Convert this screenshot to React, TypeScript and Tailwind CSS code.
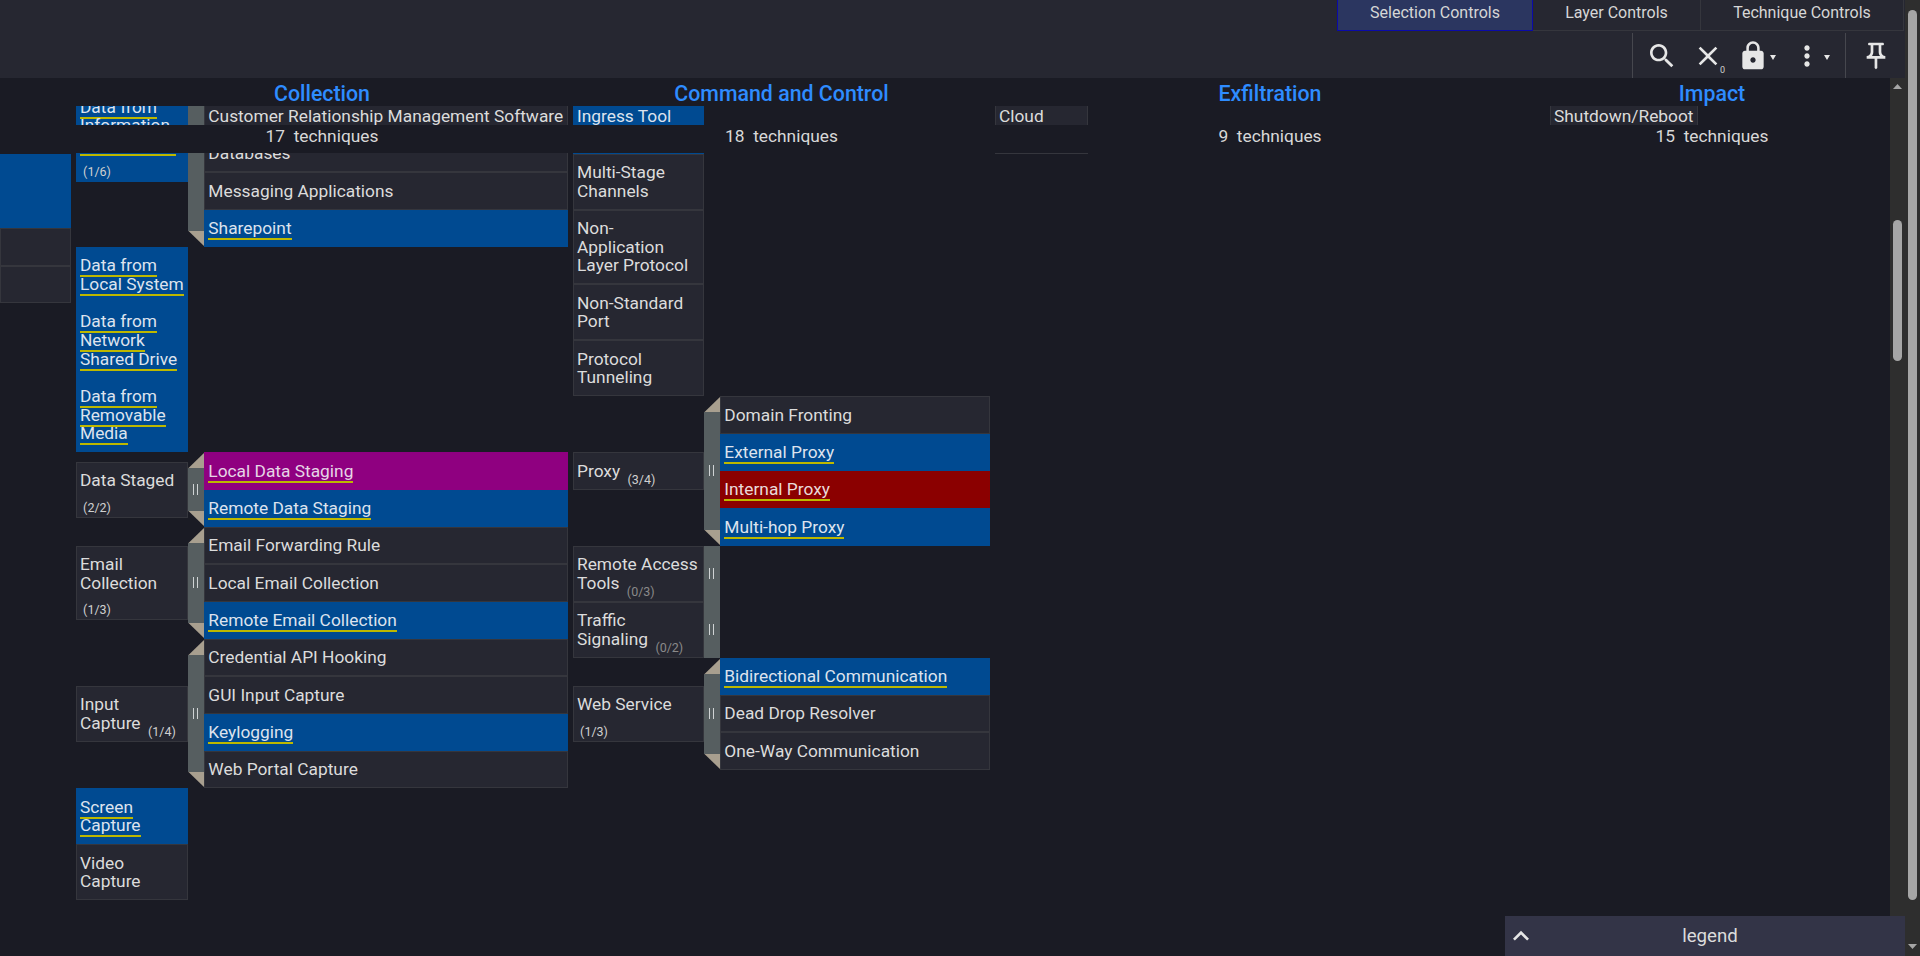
import React from "react";

type Sub = { t: string; c?: "blue" | "magenta" | "red" };

const bgOf = (c?: string) =>
  c === "blue"
    ? "bg-[#004a91] border-[#004a91] text-[#dde3ee]"
    : c === "magenta"
    ? "bg-[#8f0080] border-[#8f0080] text-[#e6d5e6]"
    : c === "red"
    ? "bg-[#8b0000] border-[#8b0000] text-[#eadada]"
    : "bg-[#262731] border-[#35363d] text-[#dcdcdc]";

function Cell({ t, c, count, dim, tight, className = "" }: { t?: string; c?: string; count?: string; dim?: boolean; tight?: boolean; className?: string }) {
  return (
    <div className={`box-border border pl-[3px] ${tight ? "pr-[1.33px]" : "pr-[3.66px]"} py-[8.33px] leading-[18.67px] ${bgOf(c)} ${className}`}>
      {t && (c ? <span className="border-b-2 border-[#bdb800]">{t}</span> : <span>{t}</span>)}
      {count && " "}
      {count && (
        <span className={`text-[12.5px] leading-[0] align-[-7px] ${dim ? "text-[#8a8a8a]" : "text-[#d0d0d0]"}`}>{"\u00a0" + count}</span>
      )}
    </div>
  );
}

function Bars() {
  return (
    <svg width="8" height="11" viewBox="0 0 8 11" className="block">
      <rect x="1" y="0" width="1" height="11" fill="#cfd3d4" />
      <rect x="5" y="0" width="1" height="11" fill="#cfd3d4" />
    </svg>
  );
}

function HandleBody() {
  return (
    <div className="flex-1 bg-[#565e60] flex items-center justify-center">
      <Bars />
    </div>
  );
}

function Handle() {
  return (
    <div className="w-[16.33px] shrink-0 flex flex-col">
      <svg width="17" height="16" viewBox="0 0 17 16" className="block shrink-0">
        <polygon points="0.5,16 17,0 17,16" fill="#a89f8f" />
      </svg>
      <HandleBody />
      <svg width="17" height="16" viewBox="0 0 17 16" className="block shrink-0">
        <polygon points="0.5,0 17,0 17,16" fill="#a89f8f" />
      </svg>
    </div>
  );
}

function Group({ t, c, count, subs, w, sw }: { t: string; c?: string; count: string; subs: Sub[]; w: string; sw: string }) {
  return (
    <div className="flex">
      <div className={`flex items-center shrink-0 ${w}`}>
        <Cell t={t} c={c} count={count} className="w-full" />
      </div>
      <Handle />
      <div className={`flex flex-col shrink-0 ${sw}`}>
        {subs.map((s) => (
          <Cell key={s.t} t={s.t} c={s.c} tight />
        ))}
      </div>
    </div>
  );
}

function Icon({ d, className = "" }: { d: string; className?: string }) {
  return (
    <svg width="32" height="32" viewBox="0 0 24 24" fill="#e6e6e6" className={`block shrink-0 ${className}`}>
      <path d={d} />
    </svg>
  );
}

function Caret({ className = "" }: { className?: string }) {
  return (
    <svg width="6" height="5" viewBox="0 0 6 5" className={`block shrink-0 mt-[4px] ${className}`}>
      <polygon points="0,0 6,0 3,5" fill="#e6e6e6" />
    </svg>
  );
}

function Arrow({ up, className = "" }: { up?: boolean; className?: string }) {
  return (
    <svg width="9" height="5" viewBox="0 0 9 5" className={`block shrink-0 ${className}`}>
      <polygon points={up ? "0,5 9,5 4.5,0" : "0,0 9,0 4.5,5"} fill="#a6a6a6" />
    </svg>
  );
}

const cols = [
  { w: "w-[492px]", name: "Collection", n: 17 },
  { w: "w-[417px]", name: "Command and Control", n: 18 },
  { w: "w-[550px]", name: "Exfiltration", n: 9 },
  { w: "w-[324px]", name: "Impact", n: 15 },
];

export default function App() {
  const g = { w: "w-[112px]", sw: "w-[363.67px]" };
  const h = { w: "w-[131px]", sw: "w-[270px]" };
  return (
    <div className="flex w-[1920px] h-[956px] overflow-hidden bg-[#1a1b24] font-[Roboto,sans-serif] text-[17.33px] text-[#dcdcdc] relative">
      <div className="w-[1905px] shrink-0 flex flex-col">
        {/* top bar */}
        <div className="h-[78px] bg-[#262731] shrink-0 flex flex-col items-end">
          <div className="h-[31px] flex text-[16px] text-[#d6d6d6] pr-[1px]">
            <div className="w-[196px] bg-[#2b3660] border border-t-0 border-[#0a0aa8] flex items-center justify-center pb-[4px]">Selection Controls</div>
            <div className="w-[168px] border-b border-r border-[#35363d] flex items-center justify-center pb-[4px]">Layer Controls</div>
            <div className="w-[203px] border-b border-r border-[#35363d] flex items-center justify-center pb-[4px]">Technique Controls</div>
          </div>
          <div className="flex-1 flex pr-[1px] pt-[2px] w-[273px]">
            <div className="w-[213px] border-l border-[#46474e] flex items-center pl-[13px]">
              <Icon d="M15.5 14h-.79l-.28-.27C15.41 12.59 16 11.11 16 9.5 16 5.91 13.09 3 9.5 3S3 5.91 3 9.5 5.91 16 9.5 16c1.61 0 3.09-.59 4.23-1.57l.27.28v.79l5 4.99L20.49 19l-4.99-5zm-6 0C7.01 14 5 11.99 5 9.5S7.01 5 9.5 5 14 7.01 14 9.5 11.99 14 9.5 14z" />
              <div className="relative ml-[14px] shrink-0">
                <Icon d="M19 6.41L17.59 5 12 10.59 6.41 5 5 6.41 10.59 12 5 17.59 6.41 19 12 13.41 17.59 19 19 17.59 13.41 12z" />
                <span className="absolute left-[28px] top-[25px] text-[9px] leading-[10px] text-[#cfcfcf]">0</span>
              </div>
              <Icon className="ml-[13px]" d="M18 8h-1V6c0-2.76-2.24-5-5-5S7 3.24 7 6v2H6c-1.1 0-2 .9-2 2v10c0 1.1.9 2 2 2h12c1.1 0 2-.9 2-2V10c0-1.1-.9-2-2-2zm-6 9c-1.1 0-2-.9-2-2s.9-2 2-2 2 .9 2 2-.9 2-2 2zm3.1-9H8.9V6c0-1.71 1.39-3.1 3.1-3.1 1.71 0 3.1 1.39 3.1 3.1v2z" />
              <Caret className="ml-[1px]" />
              <Icon className="ml-[15px]" d="M12 8c1.1 0 2-.9 2-2s-.9-2-2-2-2 .9-2 2 .9 2 2 2zm0 2c-1.1 0-2 .9-2 2s.9 2 2 2 2-.9 2-2-.9-2-2-2zm0 6c-1.1 0-2 .9-2 2s.9 2 2 2 2-.9 2-2-.9-2-2-2z" />
              <Caret className="ml-[1px]" />
            </div>
            <div className="flex-1 border-l border-[#46474e] flex items-center pl-[14px]">
              <Icon d="M14 4v5c0 1.12.37 2.16 1 3H9c.65-.86 1-1.9 1-3V4h4m3-2H7c-.55 0-1 .45-1 1s.45 1 1 1h1v5c0 1.66-1.34 3-3 3v2h5.97v7l1 1 1-1v-7H19v-2c-1.66 0-3-1.34-3-3V4h1c.55 0 1-.45 1-1s-.45-1-1-1z" />
            </div>
          </div>
        </div>

        <div className="flex-1 flex min-h-0">
          <div className="w-[1890px] shrink-0 flex flex-col min-h-0">
            {/* tactic titles */}
            <div className="h-[28px] shrink-0 flex gap-[5px] pl-[76px]">
              {cols.map((c) => (
                <div key={c.name} className={`${c.w} shrink-0 text-center text-[21.33px] leading-[31px] font-medium text-[#2e8cff]`}>{c.name}</div>
              ))}
            </div>
            {/* scroller */}
            <div className="relative flex-1 min-h-0 overflow-hidden">
              <div className="flex gap-[5px] -mt-[83px]">
                <div className="w-[71px] shrink-0 flex flex-col pt-[130.67px]">
                  <div className="h-[74.67px] bg-[#004a91]" />
                  <Cell className="h-[37.33px]" />
                  <Cell className="h-[37.33px]" />
                </div>

                <div className="w-[492px] shrink-0 flex flex-col">
                  <Group {...g} t="Data from Information Repositories" c="blue" count="(1/6)" subs={[
                    { t: "Code Repositories" }, { t: "Confluence" }, { t: "Customer Relationship Management Software" },
                    { t: "Databases" }, { t: "Messaging Applications" }, { t: "Sharepoint", c: "blue" },
                  ]} />
                  <Cell t="Data from Local System" c="blue" tight className="w-[112px]" />
                  <Cell t="Data from Network Shared Drive" c="blue" className="w-[112px]" />
                  <Cell t="Data from Removable Media" c="blue" className="w-[112px]" />
                  <Group {...g} t="Data Staged" count="(2/2)" subs={[
                    { t: "Local Data Staging", c: "magenta" }, { t: "Remote Data Staging", c: "blue" },
                  ]} />
                  <Group {...g} t="Email Collection" count="(1/3)" subs={[
                    { t: "Email Forwarding Rule" }, { t: "Local Email Collection" }, { t: "Remote Email Collection", c: "blue" },
                  ]} />
                  <Group {...g} t="Input Capture" count="(1/4)" subs={[
                    { t: "Credential API Hooking" }, { t: "GUI Input Capture" }, { t: "Keylogging", c: "blue" }, { t: "Web Portal Capture" },
                  ]} />
                  <Cell t="Screen Capture" c="blue" className="w-[112px]" />
                  <Cell t="Video Capture" className="w-[112px]" />
                </div>

                <div className="w-[417px] shrink-0 flex flex-col pt-[74.67px]">
                  <Cell t="Ingress Tool" c="blue" className="w-[131px] h-[56px]" />
                  <Cell t="Multi-Stage Channels" className="w-[131px]" />
                  <Cell t="Non-Application Layer Protocol" className="w-[131px]" />
                  <Cell t="Non-Standard Port" className="w-[131px]" />
                  <Cell t="Protocol Tunneling" className="w-[131px]" />
                  <Group {...h} t="Proxy" count="(3/4)" subs={[
                    { t: "Domain Fronting" }, { t: "External Proxy", c: "blue" }, { t: "Internal Proxy", c: "red" }, { t: "Multi-hop Proxy", c: "blue" },
                  ]} />
                  <div className="flex">
                    <Cell t="Remote Access Tools" count="(0/3)" dim className="w-[131px]" />
                    <div className="w-[16.33px] flex flex-col"><HandleBody /></div>
                  </div>
                  <div className="flex">
                    <Cell t="Traffic Signaling" count="(0/2)" dim className="w-[131px]" />
                    <div className="w-[16.33px] flex flex-col"><HandleBody /></div>
                  </div>
                  <Group {...h} t="Web Service" count="(1/3)" subs={[
                    { t: "Bidirectional Communication", c: "blue" }, { t: "Dead Drop Resolver" }, { t: "One-Way Communication" },
                  ]} />
                </div>

                <div className="w-[550px] shrink-0 pt-[74.67px]">
                  <Cell t="Cloud" className="w-[93px] h-[56px]" />
                </div>
                <div className="w-[324px] shrink-0 pt-[74.67px]">
                  <Cell t="Shutdown/Reboot" className="w-[148px] whitespace-nowrap" />
                </div>
              </div>

              {/* sticky technique counts */}
              <div className="absolute left-0 top-[19px] w-full h-[28px] bg-[#1a1b24] flex gap-[5px] pl-[76px]">
                {cols.map((c) => (
                  <div key={c.name} className={`${c.w} shrink-0 text-center leading-[22px] whitespace-pre text-[#d8d8d8]`}>{c.n + "\u00a0\u00a0techniques"}</div>
                ))}
              </div>
            </div>
          </div>

          {/* inner scrollbar */}
          <div className="w-[15px] shrink-0 bg-[#2e2e2e] flex flex-col items-center">
            <Arrow up className="mt-[6px]" />
            <div className="w-[9px] h-[141px] mt-[131px] rounded-full bg-[#a6a6a6]" />
          </div>
        </div>
      </div>

      {/* page scrollbar */}
      <div className="w-[15px] shrink-0 bg-[#2e2e2e] flex flex-col items-center">
        <div className="w-[9px] h-[890px] mt-[10px] rounded-full bg-[#a6a6a6]" />
        <Arrow className="mt-[44px]" />
      </div>

      {/* legend */}
      <div className="absolute right-[15px] bottom-0 w-[400px] h-[40px] bg-[#333447] flex items-center">
        <svg width="32" height="32" viewBox="0 0 24 24" fill="#e6e6e6" className="block shrink-0">
          <path d="M12 8l-6 6 1.41 1.41L12 10.83l4.59 4.58L18 14z" />
        </svg>
        <div className="flex-1 text-center text-[18.67px] text-[#dcdcdc] pr-[22px]">legend</div>
      </div>
    </div>
  );
}
